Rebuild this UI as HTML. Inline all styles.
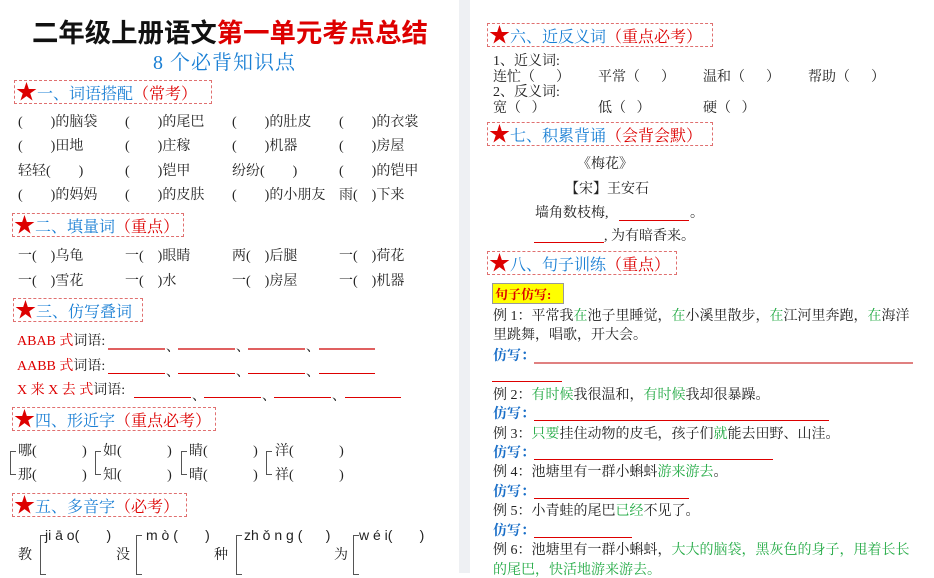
<!DOCTYPE html>
<html><head><meta charset="utf-8">
<style>
*{margin:0;padding:0;box-sizing:border-box}
body{width:934px;height:573px;overflow:hidden;background:#fff;position:relative;font-family:"Liberation Serif","Noto Serif CJK SC","Noto Sans CJK SC",serif;color:#222}
.gap{position:absolute;left:459px;top:0;width:11px;height:573px;background:#eef0f3}
.t{position:absolute;white-space:pre;font-size:14px;line-height:15px}
.h{position:absolute;height:24px;border:1px dashed #e07070;font-size:16px;line-height:22px;color:#1a7fd4;white-space:pre;padding-left:1px}
.h b{color:#d00;font-size:21px;font-weight:normal}
.h i{color:#d00;font-style:normal}
.r{color:#d00}.g{color:#22aa44}.bl{color:#1a6fc8;font-weight:bold}
.ln{position:absolute;height:1px;background:#d00}
.br{position:absolute;border:1px solid #555;border-right:none;width:6px}
</style></head><body>
<div class="gap"></div>
<div class="t" style="left:32px;top:18px;font-size:26.4px;line-height:30px;font-weight:bold;color:#111;letter-spacing:0;font-family:'Liberation Sans','Noto Sans CJK SC',sans-serif">二年级上册语文<span style="color:#d00">第一单元考点总结</span></div>
<div class="t" style="left:153px;top:52px;font-size:20px;line-height:22px;color:#1a7fd4;letter-spacing:1px">8 个必背知识点</div>

<div class="h" style="left:14px;top:80px;width:198px"><b>★</b>一、词语搭配<i>（常考）</i></div>
<div class="t" style="left:18px;top:115px">(        )的脑袋</div><div class="t" style="left:125px;top:115px">(        )的尾巴</div><div class="t" style="left:232px;top:115px">(        )的肚皮</div><div class="t" style="left:339px;top:115px">(        )的衣裳</div>
<div class="t" style="left:18px;top:139px">(        )田地</div><div class="t" style="left:125px;top:139px">(        )庄稼</div><div class="t" style="left:232px;top:139px">(        )机器</div><div class="t" style="left:339px;top:139px">(        )房屋</div>
<div class="t" style="left:18px;top:164px">轻轻(        )</div><div class="t" style="left:125px;top:164px">(        )铠甲</div><div class="t" style="left:232px;top:164px">纷纷(        )</div><div class="t" style="left:339px;top:164px">(        )的铠甲</div>
<div class="t" style="left:18px;top:188px">(        )的妈妈</div><div class="t" style="left:125px;top:188px">(        )的皮肤</div><div class="t" style="left:232px;top:188px">(        )的小朋友</div><div class="t" style="left:339px;top:188px">雨(    )下来</div>

<div class="h" style="left:12px;top:213px;width:172px"><b>★</b>二、填量词<i>（重点）</i></div>
<div class="t" style="left:18px;top:249px">一(    )乌龟</div><div class="t" style="left:125px;top:249px">一(    )眼睛</div><div class="t" style="left:232px;top:249px">两(    )后腿</div><div class="t" style="left:339px;top:249px">一(    )荷花</div>
<div class="t" style="left:18px;top:274px">一(    )雪花</div><div class="t" style="left:125px;top:274px">一(    )水</div><div class="t" style="left:232px;top:274px">一(    )房屋</div><div class="t" style="left:339px;top:274px">一(    )机器</div>

<div class="h" style="left:13px;top:298px;width:130px"><b>★</b>三、仿写叠词</div>
<div class="t" style="left:17px;top:334px"><span class="r">ABAB 式</span>词语:</div>
<div class="t" style="left:17px;top:359px"><span class="r">AABB 式</span>词语:</div>
<div class="t" style="left:17px;top:383px"><span class="r">X 来 X 去 式</span>词语:</div>
<div class="ln" style="left:108px;top:348px;width:57px;background:#e06060;height:2px"></div><div class="ln" style="left:178px;top:348px;width:57px;background:#e06060;height:2px"></div><div class="ln" style="left:248px;top:348px;width:57px;background:#e06060;height:2px"></div><div class="ln" style="left:319px;top:348px;width:56px;background:#e06060;height:2px"></div>
<div class="t" style="left:166px;top:340px">、</div><div class="t" style="left:236px;top:340px">、</div><div class="t" style="left:306px;top:340px">、</div>
<div class="ln" style="left:108px;top:373px;width:57px"></div><div class="ln" style="left:178px;top:373px;width:57px"></div><div class="ln" style="left:248px;top:373px;width:57px"></div><div class="ln" style="left:319px;top:373px;width:56px"></div>
<div class="t" style="left:166px;top:365px">、</div><div class="t" style="left:236px;top:365px">、</div><div class="t" style="left:306px;top:365px">、</div>
<div class="ln" style="left:134px;top:397px;width:57px"></div><div class="ln" style="left:204px;top:397px;width:57px"></div><div class="ln" style="left:274px;top:397px;width:57px"></div><div class="ln" style="left:345px;top:397px;width:56px"></div>
<div class="t" style="left:192px;top:389px">、</div><div class="t" style="left:262px;top:389px">、</div><div class="t" style="left:332px;top:389px">、</div>

<div class="h" style="left:12px;top:407px;width:204px"><b>★</b>四、形近字<i>（重点必考）</i></div>
<div class="br" style="left:10px;top:451px;height:24px"></div><div class="br" style="left:95px;top:451px;height:24px"></div><div class="br" style="left:181px;top:451px;height:24px"></div><div class="br" style="left:266px;top:451px;height:24px"></div>
<div class="t" style="left:18px;top:444px">哪(             )</div><div class="t" style="left:103px;top:444px">如(             )</div><div class="t" style="left:189px;top:444px">睛(             )</div><div class="t" style="left:275px;top:444px">洋(             )</div>
<div class="t" style="left:18px;top:468px">那(             )</div><div class="t" style="left:103px;top:468px">知(             )</div><div class="t" style="left:189px;top:468px">晴(             )</div><div class="t" style="left:275px;top:468px">祥(             )</div>

<div class="h" style="left:12px;top:493px;width:175px"><b>★</b>五、多音字<i>（必考）</i></div>
<div class="br" style="left:40px;top:535px;height:40px"></div><div class="br" style="left:136px;top:535px;height:40px"></div><div class="br" style="left:236px;top:535px;height:40px"></div><div class="br" style="left:353px;top:535px;height:40px"></div>
<div class="t" style="left:18px;top:548px">教</div><div class="t" style="left:116px;top:548px">没</div><div class="t" style="left:214px;top:548px">种</div><div class="t" style="left:334px;top:548px">为</div>
<div class="t" style="left:45px;top:528px;font-family:'Liberation Sans',sans-serif">ji ā o(       )</div>
<div class="t" style="left:146px;top:528px;font-family:'Liberation Sans',sans-serif">m ò (       )</div>
<div class="t" style="left:244px;top:528px;font-family:'Liberation Sans',sans-serif">zh ǒ n g (      )</div>
<div class="t" style="left:359px;top:528px;font-family:'Liberation Sans',sans-serif">w é i(       )</div>

<div class="h" style="left:487px;top:23px;width:226px"><b>★</b>六、近反义词<i>（重点必考）</i></div>
<div class="t" style="left:493px;top:54px">1、近义词:</div>
<div class="t" style="left:493px;top:70px">连忙（      ）</div><div class="t" style="left:598px;top:70px">平常（      ）</div><div class="t" style="left:703px;top:70px">温和（      ）</div><div class="t" style="left:808px;top:70px">帮助（      ）</div>
<div class="t" style="left:493px;top:85px">2、反义词:</div>
<div class="t" style="left:493px;top:101px">宽（   ）</div><div class="t" style="left:598px;top:101px">低（   ）</div><div class="t" style="left:703px;top:101px">硬（   ）</div>

<div class="h" style="left:487px;top:122px;width:226px"><b>★</b>七、积累背诵<i>（会背会默）</i></div>
<div class="t" style="left:577px;top:157px">《梅花》</div>
<div class="t" style="left:565px;top:182px">【宋】王安石</div>
<div class="t" style="left:535px;top:206px">墙角数枝梅,</div><div class="t" style="left:690px;top:206px">。</div>
<div class="ln" style="left:619px;top:220px;width:70px"></div>
<div class="ln" style="left:534px;top:242px;width:70px"></div>
<div class="t" style="left:604px;top:229px">, 为有暗香来。</div>

<div class="h" style="left:487px;top:251px;width:190px"><b>★</b>八、句子训练<i>（重点）</i></div>
<div class="t" style="left:492px;top:283px;width:72px;height:21px;background:#ffff00;border:1px solid #999;color:#d00;padding:3px 2px;font-weight:bold;font-size:13px">句子仿写:</div>
<div class="t" style="left:493px;top:309px">例 1：平常我<span class="g">在</span>池子里睡觉，<span class="g">在</span>小溪里散步，<span class="g">在</span>江河里奔跑，<span class="g">在</span>海洋</div>
<div class="t" style="left:493px;top:328px">里跳舞，唱歌，开大会。</div>
<div class="t bl" style="left:493px;top:349px">仿写：</div><div class="ln" style="left:534px;top:362px;width:379px;background:#e08080;height:2px"></div>
<div class="ln" style="left:492px;top:381px;width:70px"></div>
<div class="t" style="left:493px;top:388px">例 2：<span class="g">有时候</span>我很温和，<span class="g">有时候</span>我却很暴躁。</div>
<div class="t bl" style="left:493px;top:407px">仿写：</div><div class="ln" style="left:534px;top:420px;width:295px"></div>
<div class="t" style="left:493px;top:427px">例 3：<span class="g">只要</span>挂住动物的皮毛，孩子们<span class="g">就</span>能去田野、山洼。</div>
<div class="t bl" style="left:493px;top:446px">仿写：</div><div class="ln" style="left:534px;top:459px;width:239px"></div>
<div class="t" style="left:493px;top:465px">例 4：池塘里有一群小蝌蚪<span class="g">游来游去</span>。</div>
<div class="t bl" style="left:493px;top:485px">仿写：</div><div class="ln" style="left:534px;top:498px;width:155px"></div>
<div class="t" style="left:493px;top:504px">例 5：小青蛙的尾巴<span class="g">已经</span>不见了。</div>
<div class="t bl" style="left:493px;top:524px">仿写：</div><div class="ln" style="left:534px;top:537px;width:98px"></div>
<div class="t" style="left:493px;top:543px">例 6：池塘里有一群小蝌蚪，<span class="g">大大的脑袋，黑灰色的身子，甩着长长</span></div>
<div class="t g" style="left:493px;top:563px">的尾巴，快活地游来游去。</div>
</body></html>
